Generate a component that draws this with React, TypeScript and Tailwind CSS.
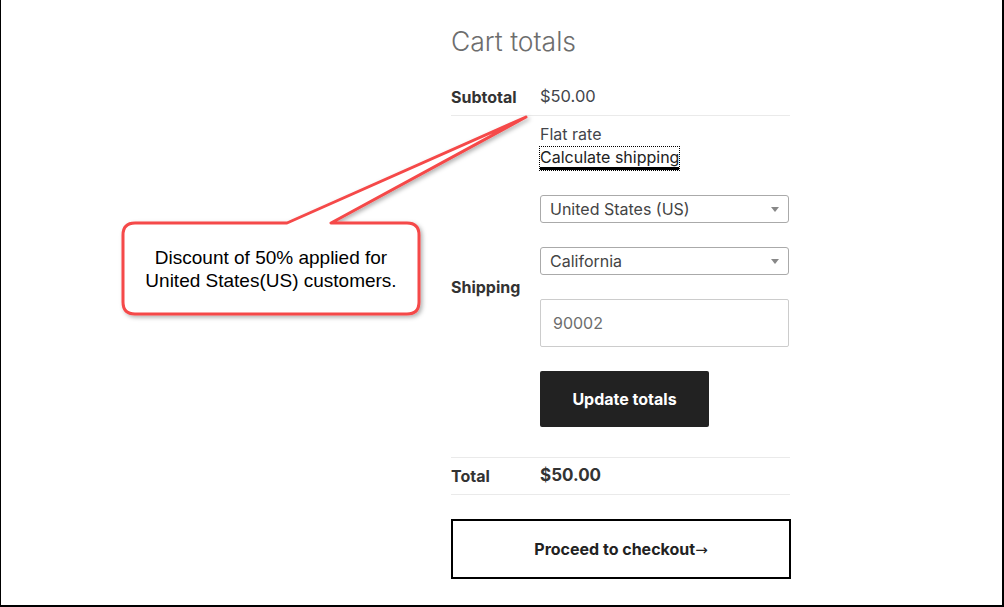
import React from 'react';

const font = { fontFamily: 'Inter, "Open Sans", sans-serif' };

function SelectBox({ value }: { value: string }) {
  return (
    <div className="flex items-center justify-between h-[28px] w-[249px] border border-[#aaa] rounded-[3px] pl-[9px] pr-[9px] text-[16px] text-[#444] bg-white">
      <span>{value}</span>
      <span className="w-0 h-0 border-l-[4px] border-r-[4px] border-t-[5px] border-l-transparent border-r-transparent border-t-[#888]" />
    </div>
  );
}

export default function App() {
  return (
    <div
      className="relative w-[1004px] h-[607px] bg-white border-l border-r-2 border-b-2 border-black overflow-hidden"
      style={font}
    >
      <div className="ml-[450px] w-[339px] pt-[25px]">
        <h2 className="text-[26.5px] leading-[32px] font-light text-[#6d6d6d]">Cart totals</h2>

        <div className="mt-[21px]">
          {/* subtotal */}
          <div className="grid grid-cols-[89px_1fr] items-center h-[38px] border-b border-[#eaeaea]">
            <span className="text-[16px] font-bold text-[#333]">Subtotal</span>
            <span className="text-[16.5px] text-[#43454b]">$50.00</span>
          </div>

          {/* shipping */}
          <div className="grid grid-cols-[89px_1fr] items-center border-b border-[#eaeaea]">
            <span className="text-[16px] font-bold text-[#333]">Shipping</span>
            <div className="pt-[6px] pb-[30px] flex flex-col">
              <span className="text-[16px] leading-[24px] text-[#43454b]">Flat rate</span>
              <span className="self-start text-[16px] leading-[20px] text-[#222] outline-1 outline-dotted outline-black border-b-[3px] border-black mt-[1px]">
                Calculate shipping
              </span>
              <div className="mt-[25px] flex flex-col gap-[24px]">
                <SelectBox value="United States (US)" />
                <SelectBox value="California" />
                <div className="h-[48px] w-[249px] border border-[#ccc] rounded-[2px] flex items-center pl-[12px] text-[16px] text-[#6d6d6d]">
                  90002
                </div>
                <button className="h-[56px] w-[169px] bg-[#222] rounded-[2px] text-white text-[16px] font-bold">
                  Update totals
                </button>
              </div>
            </div>
          </div>

          {/* total */}
          <div className="grid grid-cols-[89px_1fr] items-center h-[37px] border-b border-[#eaeaea]">
            <span className="text-[16px] font-bold text-[#333]">Total</span>
            <span className="text-[17px] font-bold text-[#333]">$50.00</span>
          </div>
        </div>

        <button className="mt-[24px] w-[340px] h-[60px] border-2 border-black bg-white text-[16px] font-bold text-[#222]">
          Proceed to checkout
          <span className="font-normal text-[15px]" style={{ fontFamily: '"DejaVu Sans", sans-serif' }}>→</span>
        </button>
      </div>

      {/* callout */}
      <svg className="absolute left-0 top-0 pointer-events-none" width="1004" height="607">
        <defs>
          <filter id="sh" x="-10%" y="-10%" width="130%" height="140%">
            <feDropShadow dx="2" dy="2" stdDeviation="2" floodColor="#000" floodOpacity="0.3" />
          </filter>
        </defs>
        <path
          d="M134 223 L286 223 L525 117 L330 223 L406 223 Q418 223 418 235 L418 302 Q418 314 406 314 L134 314 Q122 314 122 302 L122 235 Q122 223 134 223 Z"
          fill="#fff"
          stroke="#f54848"
          strokeWidth="3"
          strokeLinejoin="round"
          filter="url(#sh)"
        />
      </svg>
      <div
        className="absolute left-[122px] top-[246px] w-[296px] text-center text-[19px] leading-[23px] text-black"
        style={{ fontFamily: '"Liberation Sans", Arial, sans-serif' }}
      >
        Discount of 50% applied for
        <br />
        United States(US) customers.
      </div>
    </div>
  );
}
